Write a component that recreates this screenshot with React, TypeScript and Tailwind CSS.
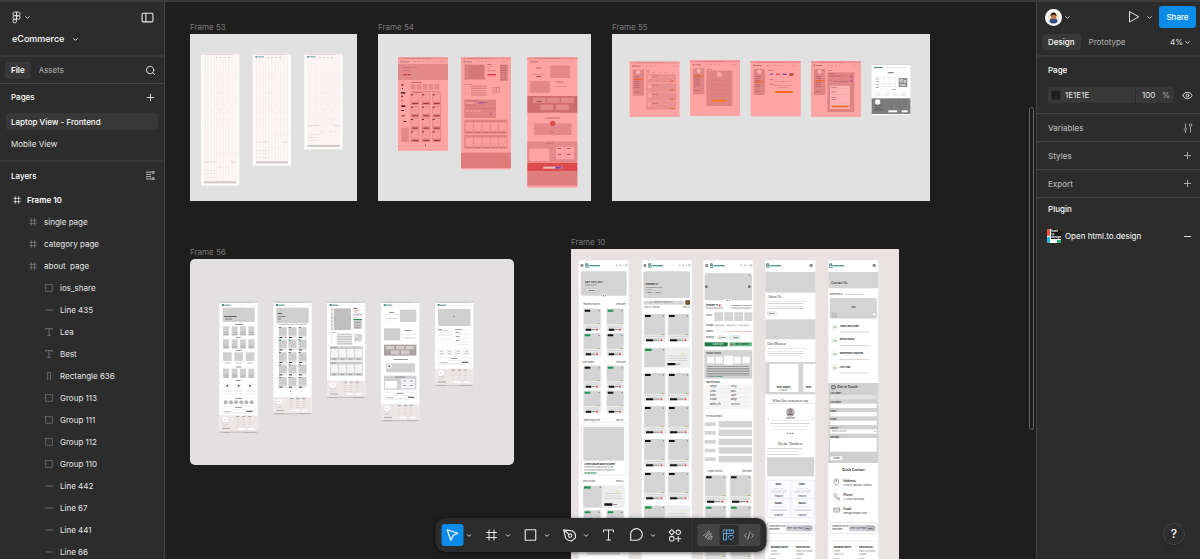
import { ChevronDown, CodeXml, Eye, Minus, PanelLeft, Plus, Search } from "lucide-react";
import clsx from "clsx";
import { useState } from "react";

type Box = [number, number, number, number];

// every combination of the given columns and rows, all the same size
const grid = (xs: number[], ys: number[], w: number, h: number): Box[] =>
  ys.flatMap((y) => xs.map((x): Box => [x, y, w, h]));

const Boxes: React.FC<{ items: Box[]; className: string; r?: number }> = ({ items, className, r }) => (
  <g className={className}>
    {items.map(([x, y, w, h], i) => (
      <rect key={i} x={x} y={y} width={w} height={h} rx={r} />
    ))}
  </g>
);

const At: React.FC<{ x: number; y: number; children: React.ReactNode }> = ({ x, y, children }) => (
  <g transform={`translate(${x} ${y})`}>{children}</g>
);

/* ---------- Artboards. Drawn at three units to the pixel ---------- */

interface ArtboardProps {
  name: string;
  width: number;
  height: number;
  place: string;
  paper: string;
  children: React.ReactNode;
}

const Artboard: React.FC<ArtboardProps> = ({ name, width, height, place, paper, children }) => (
  <figure className={clsx("absolute", place)}>
    <figcaption className="h-3 text-[8px] leading-[10px] text-[#7a7a7a]">{name}</figcaption>
    <svg width={width} height={height} viewBox={`0 0 ${width * 3} ${height * 3}`} className={clsx("block", paper)}>
      {children}
    </svg>
  </figure>
);

const GridPage: React.FC<{ h: number; logo?: boolean }> = ({ h, logo }) => (
  <>
    <rect width="115" height={h} className="fill-[#fffafa]" />
    <Boxes className="fill-[#fbf1f1]" items={grid([10, 19, 28, 37, 46, 55, 64, 73, 82, 91, 100], [6], 5, h - 14)} />
    <Boxes className="fill-[#eadfdf]" items={[[0, 0, 115, 4], [48, 60, 16, 1], [46, 120, 18, 1], [50, 168, 14, 1]]} />
    <Boxes className="fill-[#bbb0b0]" items={[[14, 2, 80, 1], [44, 11, 5, 2], [56, 11, 5, 2], [68, 11, 5, 2], [80, 11, 5, 2]]} />
    <g className="fill-none stroke-[#f1eaea]">
      <rect x="10" y="18" width="95" height="48" />
      {[72, 100, 134, 162, 198].filter((y) => y < h - 80).map((y) =>
        [10, 36, 62, 86].map((x) => <rect key={`${x}-${y}`} x={x} y={y} width="19" height="18" rx="4" />)
      )}
      {[12, 30, 48, 66, 84, 100].map((x) => (
        <circle key={x} cx={x + 2} cy={h - 94} r="6" />
      ))}
    </g>
    <Boxes
      className="fill-[#d8cfcf]"
      items={[[10, h - 72, 36, 2], [88, h - 72, 17, 2], [48, h - 54, 12, 1], [72, h - 54, 10, 1], [90, h - 54, 8, 1], [10, h - 46, 36, 1], [10, h - 36, 34, 1], [10, h - 26, 34, 1]]}
    />
    <rect x="10" y={h - 13} width="96" height="6" className="fill-[#cfc6c6]" />
    {logo && <Boxes className="fill-[#6ea3a0]" items={[[8, 8, 6, 5], [15, 9, 19, 3]]} />}
  </>
);

const RedHeader: React.FC<{ h: number }> = ({ h }) => (
  <>
    <rect width="150" height={h} className="fill-[#ffa3a3]" />
    <rect width="150" height="6" className="fill-[#ee9292]" />
    <Boxes className="fill-[#b86e6e]" items={[[22, 3, 80, 1], [8, 10, 4, 6], [14, 12, 19, 3]]} />
    <Boxes className="fill-[#d98787]" items={grid([48, 60, 72, 84, 124, 132], [12], 6, 2)} />
  </>
);

const Frame54 = () => (
  <>
    <At x={60} y={70}>
      <RedHeader h={281} />
      <rect y="20" width="150" height="48" className="fill-[#e38989]" />
      <Boxes className="fill-[#c97575]" items={[[13, 29, 44, 3], [13, 38, 22, 3], [10, 71, 12, 1]]} />
      <Boxes className="fill-[#c43c45]" items={[[16, 50, 10, 4], [28, 50, 10, 4], [39, 74, 32, 2], [43, 103, 32, 3]]} />
      <Boxes className="fill-[#e38989]" items={[...grid([38, 56, 74, 92, 110], [80], 14, 17), [38, 101, 90, 4], [10, 211, 23, 43]]} />
      <Boxes className="fill-[#dc8080]" items={grid([38, 71, 103], [109, 146, 183, 220], 26, 34)} />
      <Boxes className="fill-[#f79b9b]" items={grid([40, 73, 105], [111, 148, 185, 222], 22, 22)} />
      <Boxes className="fill-[#712c35]" items={grid([39, 72, 104], [111, 148, 185, 222], 6, 3)} />
      <Boxes className="fill-[#a2333b]" items={grid([43, 76, 108], [137, 174, 211, 248], 17, 3)} />
      <Boxes
        className="fill-[#522029]"
        items={[[10, 81, 6, 4], [12, 92, 3, 3], [9, 104, 13, 5], [10, 115, 5, 4], [11, 129, 3, 3], [10, 144, 12, 5], [10, 158, 8, 3], [11, 174, 9, 3], [16, 191, 9, 3], [81, 262, 3, 3]]}
      />
    </At>
    <At x={249} y={70}>
      <RedHeader h={336} />
      <rect x="10" y="21" width="62" height="47" className="fill-[#e79090]" />
      <rect x="21" y="23" width="49" height="42" className="fill-[#d57777]" />
      <Boxes className="fill-[#d57777]" items={grid([12], [22, 31, 40, 49, 58], 7, 7)} />
      <Boxes className="fill-[#a24f55]" items={[[79, 20, 12, 2], [10, 80, 22, 1], [12, 129, 36, 2], [12, 191, 20, 2], [12, 237, 24, 2]]} />
      <rect x="79" y="50" width="26" height="4" className="fill-[#d92e3b]" />
      <Boxes className="fill-[#d98484]" items={[[79, 26, 18, 2], [79, 32, 10, 2], [79, 38, 26, 4], [79, 58, 24, 2], [117, 21, 24, 50]]} />
      <Boxes className="fill-[#b96769]" items={grid([119, 128], [24, 31, 38, 45, 52, 59, 65], 8, 2)} />
      <Boxes className="fill-[#dc8585]" items={[...grid([30], [84, 91, 98, 105, 111], 46, 4), ...grid([12], [86, 96, 106], 5, 2), [95, 89, 22, 18]]} />
      <Boxes className="fill-[#ffa3a3]" items={[[98, 92, 6, 5], [108, 92, 6, 5], [98, 99, 6, 5], [108, 99, 6, 5]]} />
      <Boxes className="fill-[#df8282]" items={[[10, 127, 95, 55], [10, 187, 129, 42], [10, 233, 129, 41]]} />
      <Boxes className="fill-[#f99d9d]" items={[...grid([14, 39, 64, 89, 114], [195, 241], 23, 27), ...grid([15, 27, 39, 51], [159], 8, 4), [14, 135, 26, 4]]} />
      <Boxes className="fill-[#c46a70]" items={[[12, 129, 40, 2], [14, 144, 30, 2], [12, 152, 90, 1], ...grid([18, 43, 68, 93, 118], [224, 270], 14, 2)]} />
      <Boxes className="fill-[#8a45b5]" items={[[53, 134, 22, 2], [50, 139, 14, 1], [87, 169, 4, 3]]} />
      <rect y="286" width="150" height="46" className="fill-[#df7c7c]" />
    </At>
    <At x={448} y={70}>
      <RedHeader h={391} />
      <Boxes className="fill-[#e38989]" items={[[69, 24, 59, 38], [8, 71, 60, 36], [0, 252, 150, 62], [20, 198, 113, 35]]} />
      <Boxes className="fill-[#a24f55]" items={[[26, 31, 16, 2], [86, 73, 22, 2], [55, 181, 42, 2], [55, 258, 24, 1]]} />
      <Boxes className="fill-[#d98484]" items={[[14, 50, 36, 2], [82, 86, 36, 2], [72, 235, 12, 1], [14, 212, 2, 4], [137, 212, 2, 4]]} />
      <rect x="28" y="56" width="12" height="3" className="fill-[#d92e3b]" />
      <rect y="116" width="150" height="50" className="fill-[#cf6d6d]" />
      <Boxes className="fill-[#e38989]" items={[...grid([17, 59, 101], [121], 38, 16), ...grid([39, 86], [142], 38, 16)]} />
      <Boxes className="fill-[#78303a]" items={[[29, 132, 14, 2], [71, 224, 8, 1], [38, 320, 75, 1]]} />
      <circle cx="76" cy="198" r="8" className="fill-[#de4c4e]" />
      <Boxes className="fill-[#ffa3a3]" items={[[6, 274, 60, 37], [86, 268, 54, 38]]} />
      <path d="M113 268v38M86 287h54" className="stroke-[#df80b0] fill-none" />
      <Boxes className="fill-[#8f3848]" items={grid([91, 119], [273, 290], 11, 2)} />
      <rect y="316" width="150" height="25" className="fill-[#dd4c4d]" />
      <rect x="48" y="328" width="56" height="6" className="fill-[#f2bcbc]" />
      <rect x="84" y="328" width="18" height="6" className="fill-[#7b3c9e]" />
      <rect y="341" width="150" height="44" className="fill-[#df7c7c]" />
    </At>
  </>
);

const AccountMenu: React.FC<{ active: number }> = ({ active }) => (
  <>
    <rect x="9" y="24" width="34" height="78" className="fill-[#df8484]" />
    <circle cx="26" cy="32" r="6" className="fill-[#ffb4b4]" />
    <Boxes className="fill-[#b76067]" items={grid([13], [45, 52, 58, 64, 70, 76, 90], 17, 2)} />
    <rect x="12" y={active} width="29" height="3" className="fill-[#ef6c1c]" />
  </>
);

const Frame55 = () => (
  <>
    <At x={53} y={83}>
      <RedHeader h={166} />
      <AccountMenu active={51} />
      <Boxes className="fill-[#bd7074]" items={[[49, 27, 10, 2], ...grid([50, 68, 86, 104, 126], [32], 8, 1)]} />
      <Boxes className="fill-[#e99090]" items={grid([49], [37, 65, 92, 119], 90, 25)} />
      <Boxes className="fill-[#ffa3a3]" items={grid([54], [41, 69, 96, 123], 11, 11)} />
      <Boxes className="fill-[#bd6a6e]" items={grid([68], [42, 70, 97, 124], 16, 2)} />
      <Boxes className="fill-[#e8641f]" items={grid([122], [57, 84, 111, 139], 10, 3)} />
    </At>
    <At x={234} y={79}>
      <RedHeader h={167} />
      <AccountMenu active={46} />
      <Boxes className="fill-[#bd7074]" items={[[51, 27, 15, 2]]} />
      <rect x="49" y="31" width="78" height="106" className="fill-[#df8484]" />
      <circle cx="88" cy="43" r="8" className="fill-[#ffa3a3]" />
      <g className="fill-none stroke-[#cb7276]">
        <rect x="64" y="60" width="46" height="13" />
        <rect x="64" y="79" width="46" height="8" />
        <rect x="64" y="101" width="46" height="8" />
      </g>
      <rect x="65" y="118" width="45" height="6" className="fill-[#f07a18]" />
    </At>
    <At x={416} y={81}>
      <RedHeader h={166} />
      <AccountMenu active={61} />
      <Boxes className="fill-[#b76067]" items={[[51, 27, 17, 2], [57, 55, 10, 2], [57, 68, 12, 2], [70, 61, 52, 1], [70, 72, 52, 1], [82, 79, 30, 1]]} />
      <Boxes className="fill-[#7b43a8]" items={[[57, 38, 10, 3], [96, 38, 12, 4]]} />
      <Boxes className="fill-[#dd2f3a]" items={[[76, 38, 12, 3]]} />
      <rect x="116" y="37" width="12" height="7" className="fill-[#b33f2c]" />
      <rect x="74" y="90" width="52" height="6" className="fill-[#ef6c1c]" />
    </At>
    <At x={597} y={81}>
      <RedHeader h={168} />
      <AccountMenu active={58} />
      <rect x="49" y="34" width="81" height="119" className="fill-[#df8484]" />
      <Boxes className="fill-[#b76067]" items={[[51, 27, 10, 2], [53, 37, 18, 2], [53, 42, 54, 1], [53, 47, 44, 1], [53, 57, 10, 1], [66, 61, 44, 2]]} />
      <Boxes className="fill-[#c93b8d]" items={grid([119], [43, 56], 5, 7)} />
      <rect x="57" y="74" width="59" height="70" className="fill-[#ffb3b3]" />
      <Boxes className="fill-[#b76067]" items={grid([61], [78, 92, 108, 114], 16, 2)} />
      <Boxes className="fill-[#e39c9c]" items={grid([61], [83, 100, 121, 128], 50, 1)} />
      <rect x="61" y="134" width="52" height="5" className="fill-[#ef6c1c]" />
    </At>
    <At x={779} y={87}>
      <rect width="116" height="156" className="fill-white" />
      <Boxes className="fill-[#d6d6d6]" items={[[0, 1, 116, 5], [46, 12, 60, 2], [12, 43, 60, 1], [12, 62, 60, 1], [12, 70, 60, 1], [34, 43, 1, 34], [52, 43, 1, 34], [71, 43, 1, 34]]} />
      <Boxes className="fill-[#3f8782]" items={[[8, 11, 6, 5], [15, 12, 19, 3]]} />
      <Boxes className="fill-[#8f8f8f]" items={[[48, 27, 18, 4], [12, 47, 10, 2], [12, 54, 10, 2], [12, 64, 10, 2], [12, 73, 10, 2], [60, 79, 12, 2], [81, 45, 26, 27]]} />
      <Boxes className="fill-[#c4c4c4]" items={[[84, 48, 9, 10], [96, 51, 8, 9], [86, 63, 16, 6]]} />
      <Boxes className="fill-[#b0b0b0]" items={grid([12, 39, 64, 91], [92, 98], 13, 1)} />
      <rect y="106" width="116" height="47" className="fill-[#7d7d7d]" />
      <circle cx="18" cy="117" r="8" className="fill-white" />
      <Boxes className="fill-[#5c5c5c]" items={[[10, 127, 24, 2], [10, 133, 20, 2], [9, 139, 26, 3], ...grid([55, 76, 94], [110, 117, 124, 131], 10, 1)]} />
      <Boxes className="fill-white" items={[[50, 142, 27, 6], [90, 142, 18, 6]]} />
    </At>
  </>
);

const SiteFooter: React.FC<{ y: number }> = ({ y }) => (
  <At x={0} y={y}>
    <rect width="115" height="48" className="fill-[#ede7e7]" />
    <circle cx="18" cy="13" r="8" className="fill-white" />
    <Boxes className="fill-[#c4bcbc]" items={[[15, 12, 6, 2], [9, 22, 18, 1], [9, 27, 20, 1], [9, 32, 16, 1], ...grid([50, 68, 86], [8, 14, 20, 26, 32], 9, 1)]} />
    <Boxes className="fill-[#8d8787]" items={[...grid([50, 68, 86], [3], 10, 2), [9, 39, 24, 2]]} />
    <Boxes className="fill-white" items={[[56, 38, 22, 5], [86, 38, 18, 5]]} />
    <rect y="48" width="115" height="5" className="fill-[#cdc6c6]" />
    <Boxes className="fill-[#8f8888]" items={[[8, 50, 24, 1], [76, 50, 32, 1]]} />
  </At>
);

const WirePage: React.FC<{ h: number; children: React.ReactNode }> = ({ h, children }) => (
  <>
    <rect width="115" height={h} className="fill-white" />
    <rect width="115" height="6" className="fill-[#d6d6d6]" />
    <Boxes className="fill-[#a0a0a0]" items={[[14, 3, 80, 1]]} />
    <Boxes className="fill-[#4b8b87]" items={[[8, 9, 6, 6], [15, 11, 19, 3]]} />
    <Boxes className="fill-[#c4c4c4]" items={grid([44, 53, 62, 71, 98, 104], [12], 5, 1)} />
    {children}
    <SiteFooter y={h - 53} />
  </>
);

const Newsletter: React.FC<{ y: number }> = ({ y }) => (
  <At x={9} y={y}>
    <rect width="97" height="21" rx="2" className="fill-white stroke-[#cfcfcf]" />
    <Boxes className="fill-[#6f6f6f]" items={[[38, 3, 20, 2], [72, 13, 19, 4], [5, 14, 22, 1]]} />
    <Boxes className="fill-[#c9c9c9]" items={[[30, 8, 40, 1], [5, 18, 66, 1]]} />
  </At>
);

const Frame56 = () => (
  <>
    <At x={88} y={126}>
      <WirePage h={396}>
        <Boxes className="fill-[#d0d0d0]" items={[[10, 20, 96, 43], ...grid([11, 37, 62, 87], [76, 115, 203], 18, 28), ...grid([11, 45, 79], [154], 26, 26)]} />
        <Boxes className="fill-[#5d5d5d]" items={[[14, 45, 38, 3], [17, 53, 22, 2], [47, 70, 24, 2], [50, 109, 14, 2], [50, 147, 16, 2], [50, 197, 16, 2], [50, 237, 14, 2], [48, 292, 20, 2]]} />
        <Boxes className="fill-[#a4a4a4]" items={[...grid([13, 39, 64, 89], [94, 99, 134, 139, 221, 227], 14, 2), ...grid([16, 49, 83], [184, 188], 18, 1)]} />
        <Boxes className="fill-[#d8d8d8]" items={grid([10, 44, 78], [268, 272, 276], 29, 1)} />
        {[24, 58, 92].map((x) => (
          <g key={x}>
            <circle cx={x} cy="254" r="8" className="fill-[#f0f0f0]" />
            <circle cx={x} cy="254" r="3" className="fill-[#666]" />
          </g>
        ))}
        {[19, 35, 50, 66, 81, 97].map((x) => (
          <circle key={x} cx={x} cy="304" r="6" className="fill-[#b5b5b5]" />
        ))}
        <Newsletter y={316} />
      </WirePage>
    </At>
    <At x={250} y={126}>
      <WirePage h={341}>
        <rect x="9" y="20" width="97" height="47" className="fill-[#d0d0d0]" />
        <Boxes className="fill-[#5d5d5d]" items={[[13, 36, 13, 3], [13, 46, 24, 2], [13, 53, 10, 2], [16, 70, 84, 1]]} />
        <Boxes className="fill-[#e6e6e6]" items={grid([16, 45, 75], [79, 116, 154, 191, 228], 25, 33)} />
        <Boxes className="fill-[#cdcdcd]" items={grid([17, 46, 76], [79, 116, 154, 191, 228], 23, 25)} />
        <Boxes className="fill-[#3c3c3c]" items={[...grid([17, 46, 76], [79, 154, 191, 228], 6, 2), ...grid([18, 47, 77], [108, 145, 183, 220, 257], 9, 3)]} />
        <Boxes className="fill-[#239058]" items={[...grid([17, 46, 76], [116], 6, 3), [50, 271, 3, 2]]} />
        <rect x="35" y="108" width="3" height="3" className="fill-[#d44]" />
      </WirePage>
    </At>
    <At x={411} y={126}>
      <WirePage h={292}>
        <Boxes className="fill-[#cfcfcf]" items={[...grid([12], [22, 34, 45, 56, 67, 78], 7, 9), [82, 99, 22, 22]]} />
        <rect x="21" y="22" width="51" height="65" className="fill-[#c0c0c0]" />
        <Boxes className="fill-[#666]" items={[[79, 21, 12, 3], [23, 53, 2, 3], [68, 53, 2, 3], [11, 93, 18, 1]]} />
        <Boxes className="fill-[#e58a8a]" items={[[79, 27, 18, 2], [79, 32, 12, 2], [79, 50, 24, 1]]} />
        <Boxes className="fill-[#c8c8c8]" items={[[79, 38, 26, 6], ...grid([30], [98, 105, 112, 119, 126], 45, 5), ...grid([12], [100, 108, 116, 124], 4, 2), [80, 60, 24, 24]]} />
        <Boxes className="fill-[#999]" items={grid([81], [63, 73, 79], 20, 2)} />
        <rect x="79" y="54" width="26" height="4" className="fill-[#239058]" />
        <Boxes className="fill-[#c9c9c9]" items={[[9, 136, 98, 42], [9, 182, 98, 42]]} />
        <Boxes className="fill-[#f4f4f4]" items={[...grid([11, 35, 59, 83], [144, 190], 22, 26), [87, 103, 6, 5]]} />
        <Boxes className="fill-[#888]" items={[...grid([11], [138, 185], 18, 2), ...grid([17, 41, 65, 89], [173, 219], 10, 2)]} />
      </WirePage>
    </At>
    <At x={573} y={126}>
      <WirePage h={362}>
        <Boxes className="fill-[#d0d0d0]" items={[[57, 26, 49, 37], [9, 82, 49, 36], [15, 187, 87, 27], [9, 224, 97, 42]]} />
        <Boxes className="fill-[#6a6a6a]" items={[[24, 33, 16, 2], [70, 88, 22, 2], [37, 175, 44, 2], [42, 227, 30, 2]]} />
        <Boxes className="fill-[#c4c4c4]" items={[[9, 41, 42, 1], [15, 51, 34, 2], [24, 61, 12, 1], [63, 99, 42, 1], [66, 110, 36, 2], [44, 205, 40, 1]]} />
        <rect x="9" y="131" width="97" height="33" className="fill-[#aca1a1]" />
        <Boxes className="fill-[#d2cccc]" items={[...grid([15, 45, 74], [135], 25, 10), ...grid([30, 60], [148], 25, 12)]} />
        <circle cx="25" cy="196" r="7" className="fill-white" />
        <circle cx="25" cy="196" r="3" className="fill-[#555]" />
        <rect x="12" y="240" width="36" height="22" className="fill-white" />
        <g className="fill-[#fafafa] stroke-[#c5c0ef]">
          <rect x="60" y="233" width="42" height="30" />
          <path d="M81 233v30M60 248h42" />
        </g>
        <Boxes className="fill-[#555]" items={grid([67, 87], [239, 253], 8, 2)} />
        <Newsletter y={274} />
      </WirePage>
    </At>
    <At x={735} y={126}>
      <WirePage h={256}>
        <rect x="9" y="24" width="97" height="51" className="fill-[#d0d0d0]" />
        <Boxes className="fill-[#777]" items={[[54, 45, 5, 2], [9, 84, 12, 2], [60, 84, 22, 2], [9, 89, 30, 1], ...grid([62], [94, 106, 118], 12, 2)]} />
        <Boxes className="fill-[#d4d4d4]" items={[...grid([9], [94, 99, 104, 116], 42, 1), ...grid([64], [99, 111, 123, 131], 40, 1)]} />
        <g className="fill-[#f6f6f6] stroke-[#d6d6d6]">
          {[10, 35, 60, 86].map((x) => (
            <rect key={x} x={x} y="146" width="18" height="15" rx="4" />
          ))}
        </g>
        <Boxes className="fill-[#b0b0b0]" items={grid([15, 40, 65, 91], [150, 156], 8, 2)} />
        <Newsletter y={169} />
      </WirePage>
    </At>
  </>
);

/* ---------- Frame 10: the mobile shop pages ---------- */

const MobilePage: React.FC<{ x: number; simple?: boolean; children: React.ReactNode }> = ({ x, simple, children }) => (
  <At x={x} y={34}>
    <rect width="150" height="950" className="fill-white" />
    <g className="fill-none stroke-[#286f6b] stroke-2">
      <path d={simple ? "M4 10h6v4h-6zM4 15h8v6h-8z" : "M21 10h6v4h-6zM21 15h8v6h-8z"} />
    </g>
    <rect x={simple ? 15 : 32} y="14" width="32" height="4" className="fill-[#4d9691]" />
    {simple ? (
      <Boxes className="fill-[#555]" items={grid([133], [12, 15, 18], 9, 2)} />
    ) : (
      <>
        <Boxes className="fill-[#555]" items={grid([6], [12, 15, 18], 8, 2)} />
        <g className="fill-none stroke-[#777]">
          <circle cx="114" cy="15" r="2" />
          <path d="M123 17v-4h3v4zM132 14h3l-1 4M140 13h6v4h-6z" />
        </g>
      </>
    )}
    {children}
  </At>
);

interface ProductProps {
  x: number;
  y: number;
  w?: number;
  h?: number;
  green?: boolean;
}

const Product: React.FC<ProductProps> = ({ x, y, w = 66, h = 84, green }) => (
  <At x={x} y={y}>
    <rect width={w} height={h} className="fill-[#e9e9e9]" />
    <rect x="2" width={w - 5} height={h - 22} className="fill-[#d4d4d4]" />
    <rect x="4" y="3" width="17" height="6" rx="1" className={green ? "fill-[#219254]" : "fill-[#111]"} />
    <rect x={w - 9} y="4" width="4" height="4" className="fill-[#8a8a8a]" />
    <rect x={w - 16} y={h - 24} width="4" height="3" className="fill-[#e0cf52]" />
    <rect x={w - 11} y={h - 24} width="7" height="2" className="fill-[#a0a0a0]" />
    <Boxes className="fill-[#d0d0d0]" items={[[6, h - 17, w - 12, 2], [6, h - 12, w - 14, 2]]} />
    <rect x="7" y={h - 8} width={w > 60 ? 22 : 17} height="6" rx="1" className="fill-[#111]" />
    <rect x={w > 60 ? 30 : 26} y={h - 7} width={w > 60 ? 17 : 10} height="3" className="fill-[#8b8b8b]" />
    <path d={`M${w - 16} ${h - 7}q2-2 3 0q2-2 3 0q0 3-3 5q-3-2-3-5z`} className="fill-[#ee2b33]" />
  </At>
);

const WideProduct: React.FC<{ x: number; y: number; w: number; h: number }> = ({ x, y, w, h }) => (
  <At x={x} y={y}>
    <rect width={w} height={h} className="fill-[#ededed]" />
    <rect x="2" y="2" width={w / 2 - 8} height={h - 4} className="fill-[#d4d4d4]" />
    <rect x="4" y="3" width="20" height="7" className="fill-[#219254]" />
    <rect x={w / 2 - 12} y="4" width="4" height="4" className="fill-[#8a8a8a]" />
    <Boxes className="fill-[#cbcbcb]" items={grid([w / 2 + 4], [24, 31, 38], w / 2 - 12, 2)} />
    <rect x={w - 24} y="18" width="4" height="3" className="fill-[#e0cf52]" />
    <rect x={w / 2 + 2} y={h - 14} width="24" height="7" rx="1" className="fill-[#111]" />
    <rect x={w / 2 + 28} y={h - 12} width="12" height="3" className="fill-[#8b8b8b]" />
  </At>
);

const Signup = () => (
  <>
    <rect x="5" y="787" width="142" height="32" rx="8" className="fill-white stroke-[#b7b4c8]" />
    <text x="12" y="799" className="fill-[#222] text-[6px]">Subscribe To Our</text>
    <text x="12" y="808" className="fill-[#222] text-[6px]">Newsletter</text>
    <rect x="63" y="795" width="78" height="17" rx="5" className="fill-[#d3d3dc] stroke-[#a9a9b8]" />
    <text x="66" y="806" className="fill-[#333] text-[6px]">Enter your email</text>
    <rect x="113" y="797" width="26" height="13" rx="6" className="fill-[#bdbdc4] stroke-[#8b8b94]" />
    <rect x="120" y="803" width="13" height="2" className="fill-[#555]" />
    <path d="M0 842h150" className="stroke-[#d4d4d4]" />
    <g className="fill-[#1c1c1c] text-[8px] font-bold">
      <text x="17" y="863">Browse More</text>
      <text x="92" y="863">Resources</text>
    </g>
    <g className="fill-[#777] text-[6px]">
      <text x="17" y="874">Home</text>
      <text x="17" y="885">About Us</text>
      <text x="92" y="874">Track Your Order</text>
      <text x="92" y="885">Support</text>
    </g>
    <Boxes className="fill-[#b0b0b0]" items={grid([17, 92], [894], 16, 2)} />
  </>
);

const HomePage = () => (
  <MobilePage x={23}>
    <rect x="6" y="33" width="138" height="73" rx="5" className="fill-[#d4d4d4]" />
    <text x="19" y="68" className="fill-[#222] text-[8px] font-semibold">GET 50% OFF</text>
    <rect x="19" y="73" width="34" height="2" className="fill-[#777]" />
    <rect x="20" y="84" width="34" height="11" rx="3" className="fill-[#dedede] stroke-[#aaa]" />
    <rect x="30" y="89" width="18" height="2" className="fill-[#555]" />
    <rect x="65" y="103" width="18" height="7" rx="3" className="fill-white" />
    <Boxes className="fill-[#444]" items={grid([68, 73, 78], [105], 3, 3)} r={1} />
    <g className="fill-[#333] text-[6px]">
      <text x="13" y="135">Featured Products</text>
      <text x="111" y="135">View More</text>
      <text x="13" y="307">Best Sellers</text>
      <text x="111" y="307">View More</text>
      <text x="15" y="482">Latest Blog Posts</text>
      <text x="111" y="482">View All</text>
      <text x="13" y="665">New Arrivals</text>
      <text x="111" y="665">View All</text>
    </g>
    {[145, 219, 316, 391].map((y, i) => (
      <g key={y}>
        <Product x={14} y={y} w={54} h={68} green={i === 1 || i === 3} />
        <Product x={83} y={y} w={54} h={68} green={i === 0 || i === 2} />
      </g>
    ))}
    <path d="M13 487h132" className="stroke-[#c8c8c8]" />
    <rect x="8" y="495" width="134" height="149" rx="6" className="fill-white stroke-[#e0e0e0] stroke-2" />
    <rect x="14" y="500" width="122" height="101" className="fill-[#d4d4d4]" />
    <text x="17" y="614" className="fill-[#222] text-[7px] font-bold">Lorem ipsum dolor sit amet</text>
    <g className="fill-[#777] text-[6px]">
      <text x="17" y="624">consectetur adipiscing elit sed</text>
      <text x="17" y="631">do eiusmod tempor incididunt ut</text>
    </g>
    <text x="17" y="640" className="fill-[#1d8a50] text-[7px] font-bold">Read More</text>
    <WideProduct x={12} y={675} w={126} h={68} />
    <Product x={14} y={750} w={54} h={68} green />
    <Product x={83} y={750} w={54} h={68} green />
    <rect x="26" y="874" width="98" height="10" className="fill-[#e2e2e2]" />
  </MobilePage>
);

const CategoryPage = () => (
  <MobilePage x={212}>
    <rect x="5" y="33" width="140" height="80" rx="5" className="fill-[#d4d4d4]" />
    <text x="12" y="73" className="fill-[#222] text-[8px] font-bold">iPhone 17</text>
    <Boxes className="fill-[#8a8a8a]" items={[[12, 81, 50, 2], [12, 86, 20, 1]]} />
    <rect x="12" y="92" width="22" height="8" rx="2" className="fill-[#e4e4e4] stroke-[#aaa]" />
    <rect x="38" y="92" width="22" height="8" rx="2" className="fill-[#e4e4e4] stroke-[#aaa]" />
    <Boxes className="fill-[#666]" items={[[16, 95, 14, 2], [42, 95, 14, 2]]} />
    <rect x="6" y="121" width="121" height="12" rx="3" className="fill-[#d8d8d8]" />
    <circle cx="27" cy="126" r="2" className="fill-none stroke-[#777]" />
    <text x="36" y="129" className="fill-[#777] text-[6px]">Search for products</text>
    <rect x="131" y="120" width="14" height="13" rx="2" className="fill-[#61421f]" />
    <circle cx="138" cy="126" r="3" className="fill-none stroke-[#d8a860]" />
    <text x="8" y="143" className="fill-[#555] text-[6px]">Sort by: Popular</text>
    <text x="122" y="143" className="fill-[#555] text-[6px]">View All</text>
    <WideProduct x={6} y={262} w={139} h={60} />
    {[161, 338, 437, 536, 635].map((y) => (
      <g key={y}>
        <Product x={6} y={y} />
        <Product x={78} y={y} />
      </g>
    ))}
    <WideProduct x={6} y={735} w={139} h={60} />
  </MobilePage>
);

const SinglePage = () => (
  <MobilePage x={397}>
    <rect x="4" y="39" width="142" height="81" rx="5" className="fill-[#d4d4d4]" />
    <circle cx="9" cy="79" r="4" className="fill-[#666]" />
    <circle cx="138" cy="79" r="4" className="fill-[#666]" />
    <rect x="136" y="43" width="4" height="5" className="fill-[#999]" />
    <rect x="63" y="116" width="20" height="7" rx="3" className="fill-white" />
    <Boxes className="fill-[#555]" items={grid([67, 72, 77], [118], 3, 3)} r={1} />
    <text x="8" y="138" className="fill-[#222] text-[8px] font-bold">iPhone 17</text>
    <path d="M46 133q2-2 3 0q2-2 3 0q0 4-3 6q-3-2-3-6z" className="fill-[#e23b42]" />
    <Boxes className="fill-[#777]" items={[[8, 142, 52, 2], [84, 134, 30, 2], [118, 134, 26, 2], [84, 142, 60, 2]]} />
    <g className="fill-[#333] text-[6px]">
      <text x="7" y="168">Colors</text>
      <text x="7" y="197">Storage</text>
      <text x="7" y="216">Quantity</text>
      <text x="7" y="234">Shipping</text>
    </g>
    <Boxes className="fill-[#d4d4d4]" items={[...grid([33, 63, 93], [156], 26, 26), [123, 156, 24, 26], ...grid([33, 69, 105], [192], 31, 6)]} />
    <rect x="43" y="209" width="20" height="10" rx="5" className="fill-none stroke-[#c8c8c8]" />
    <rect x="67" y="212" width="78" height="2" className="fill-[#f2aaaa]" />
    <rect x="42" y="226" width="28" height="11" rx="3" className="fill-[#f1f1f1] stroke-[#ddd]" />
    <rect x="46" y="230" width="5" height="4" className="fill-[#d9b74a]" />
    <rect x="78" y="226" width="32" height="11" rx="3" className="fill-[#e3f0e9] stroke-[#a9c9b8]" />
    <Boxes className="fill-[#666]" items={[[53, 231, 13, 2], [89, 231, 16, 2]]} />
    <rect x="4" y="246" width="69" height="12" className="fill-[#1d7746]" />
    <rect x="78" y="246" width="68" height="12" className="fill-[#66c493]" />
    <text x="27" y="254" className="fill-white text-[6px]">Add to Cart</text>
    <text x="94" y="254" className="fill-[#1a1a1a] text-[6px] font-semibold">Add to Wishlist</text>
    <path d="M83 250q2-2 3 0q2-2 3 0q0 4-3 6q-3-2-3-6z" className="fill-[#e23b42]" />
    <rect x="4" y="270" width="142" height="84" className="fill-[#d4d4d4] stroke-[#c4c4c4]" />
    <text x="9" y="280" className="fill-[#333] text-[6px] font-semibold">Product Details</text>
    <Boxes className="fill-white" items={[...grid([12, 37, 91, 118], [289], 21, 20), [62, 286, 26, 27]]} />
    <Boxes className="fill-[#808080]" items={[...grid([10], [318, 323, 328, 333, 338, 343], 128, 2), [10, 348, 24, 2]]} />
    <rect x="36" y="347" width="22" height="2" className="fill-[#2b8b5b]" />
    <text x="8" y="368" className="fill-[#333] text-[6px] font-semibold">Specifications</text>
    <rect x="4" y="372" width="142" height="74" className="fill-[#f6f6f6]" />
    <g className="fill-[#333] text-[6px]">
      {["Weight", "Colors", "Brand", "Display", "Battery Life"].map((spec, i) => (
        <g key={spec}>
          <text x="20" y={381 + i * 13}>{spec}</text>
          <text x="82" y={381 + i * 13}>{["200 g", "Black", "Apple", "Range", "100 hours"][i]}</text>
          <path d={`M20 ${385 + i * 13}h120`} className="stroke-[#e2e2e2]" />
        </g>
      ))}
      <text x="8" y="470">Technical Details</text>
      <text x="12" y="635">People Also Buy</text>
      <text x="115" y="635">View More</text>
    </g>
    <Boxes className="fill-[#d4d4d4]" items={[...grid([4], [486, 512, 539, 565, 591], 33, 11), ...grid([46], [482, 508, 535, 561, 587], 100, 19)]} />
    <Product x={4} y={645} />
    <Product x={79} y={645} />
    <Product x={4} y={736} green />
    <Product x={79} y={736} green />
    <Product x={4} y={827} green />
    <Product x={79} y={827} green />
  </MobilePage>
);

const AboutPage = () => (
  <MobilePage x={583} simple>
    <Boxes className="fill-[#d4d4d4]" items={[[0, 35, 150, 62], [0, 177, 150, 60], [0, 305, 150, 97], [5, 591, 142, 57]]} />
    <g className="fill-[#333] font-['Liberation_Serif'] text-[11px]">
      <text x="6" y="112">About Us</text>
      <text x="6" y="253">Our Mission</text>
      <text x="75" y="426" textAnchor="middle">What Our customers say</text>
      <text x="75" y="553" textAnchor="middle">By the Numbers</text>
    </g>
    <Boxes
      className="fill-[#bdbdbd]"
      items={[
        [6, 122, 118, 1], [6, 129, 108, 2], [6, 137, 108, 1], [6, 144, 108, 2], [6, 265, 118, 1], [6, 272, 108, 1], [6, 279, 108, 2], [6, 286, 108, 1],
        [6, 430, 140, 1], [15, 481, 118, 1], [15, 489, 118, 2], [20, 498, 108, 1], [26, 507, 96, 1],
        [6, 564, 104, 2], [6, 572, 92, 1], [6, 581, 92, 2],
      ]}
    />
    <rect x="5" y="154" width="28" height="11" rx="3" className="fill-[#ececec] stroke-[#ccc]" />
    <rect x="11" y="159" width="16" height="2" className="fill-[#888]" />
    <Boxes className="fill-white" items={[[12, 311, 87, 84], [114, 311, 36, 84]]} />
    <text x="55" y="382" textAnchor="middle" className="fill-[#222] text-[7px] font-bold">Best Quality</text>
    <text x="122" y="382" className="fill-[#222] text-[7px] font-bold">Best</text>
    <text x="55" y="391" textAnchor="middle" className="fill-[#2b8b5b] text-[6px]">Products</text>
    <circle cx="75" cy="456" r="13" className="fill-[#b9b0b0]" />
    <circle cx="75" cy="451" r="4" className="fill-none stroke-[#555] stroke-2" />
    <path d="M67 463q8-8 16 0z" className="fill-none stroke-[#555] stroke-2" />
    <text x="75" y="476" textAnchor="middle" className="fill-[#333] text-[6px]">John Doe</text>
    <path d="M10 473l-3 3 3 3M139 473l3 3-3 3" className="fill-none stroke-[#555]" />
    <Boxes className="fill-[#555]" items={grid([66, 73, 80], [517], 4, 4)} r={2} />
    <g className="fill-[#fafaff] stroke-[#cfcaf6]">
      <rect x="5" y="659" width="142" height="113" />
      <path d="M76 659v113M5 715h142" />
    </g>
    <g className="fill-[#222]">
      {["10K+", "25K+", "100K+", "1000+"].map((stat, i) => (
        <At key={stat} x={40 + (i % 2) * 71} y={674 + Math.floor(i / 2) * 56}>
          <text textAnchor="middle" className="text-[8px] font-bold">{stat}</text>
          <Boxes className="fill-[#c8c8c8]" items={[[-16, 9, 32, 1], [-24, 16, 48, 1], [-24, 20, 48, 2]]} />
          <text y="37" textAnchor="middle" className="text-[6px]">Products</text>
        </At>
      ))}
    </g>
    <Signup />
  </MobilePage>
);

const ContactPage = () => (
  <MobilePage x={772} simple>
    <rect y="35" width="150" height="49" className="fill-[#d4d4d4]" />
    <text x="9" y="72" className="fill-[#222] text-[9px] font-medium">Contact Us</text>
    <text x="4" y="103" className="fill-[#333] text-[7px]">Welcome to</text>
    <rect x="50" y="101" width="55" height="2" className="fill-[#bbb]" />
    <rect x="5" y="114" width="140" height="60" rx="4" className="fill-[#d4d4d4] stroke-[#c4c4c4]" />
    <text x="75" y="144" textAnchor="middle" className="fill-[#333] text-[7px]">Map</text>
    <rect x="11" y="158" width="14" height="13" rx="2" className="fill-[#c6c6c6] stroke-[#999]" />
    <circle cx="137" cy="162" r="6" className="fill-[#f2f2f2] stroke-[#999]" />
    {["Track Your Order", "Return Policy", "Wholesaler Inquiries", "Live Chat"].map((topic, i) => (
      <At key={topic} x={19} y={199 + i * 41}>
        <circle r="9" className="fill-white stroke-[#c9d8c9]" />
        <path d="M-4-2h6v5h-6zM2 0h3v3h-3" className="fill-none stroke-[#4a9440]" />
        <text x="15" y="0" className="fill-[#222] text-[7px] font-bold">{topic}</text>
        <rect x="15" y="15" width="88" height="2" className="fill-[#c4c4c4]" />
      </At>
    ))}
    <rect y="368" width="150" height="240" className="fill-[#d0d0d0]" />
    <rect x="10" y="376" width="11" height="9" rx="2" className="fill-none stroke-[#333] stroke-2" />
    <path d="M13 380h5M13 388l3-3" className="stroke-[#333]" />
    <text x="27" y="384" className="fill-[#222] text-[10px] font-semibold">Get in Touch</text>
    <rect x="5" y="404" width="140" height="13" className="fill-[#e2e2e2]" />
    <Boxes className="fill-white" items={[...grid([5], [430, 455, 481, 507], 140, 13), [5, 533, 140, 41]]} />
    <g className="fill-[#333] text-[6px] font-semibold">
      {["First Name*", "Last Name*", "Email*", "Phone", "Subject*", "Message"].map((field, i) => (
        <text key={field} x="6" y={402 + i * 26}>{field}</text>
      ))}
    </g>
    <text x="10" y="516" className="fill-[#888] text-[6px]">Select a subject</text>
    <path d="M138 512l2 3 2-3z" className="fill-[#444]" />
    <rect x="4" y="587" width="40" height="14" rx="6" className="fill-white stroke-[#999]" />
    <text x="24" y="596" textAnchor="middle" className="fill-[#333] text-[6px]">Submit</text>
    <text x="75" y="632" textAnchor="middle" className="fill-[#222] text-[10px] font-semibold">Quick Contact</text>
    <g className="fill-[#222] text-[9px] font-semibold">
      <text x="45" y="664">Address</text>
      <text x="45" y="706">Phone</text>
      <text x="45" y="749">Email</text>
    </g>
    <g className="fill-[#333] text-[7px]">
      <text x="45" y="676">7730 St Vancouv, Ontario</text>
      <text x="45" y="718">+1 (000) 000 0000</text>
      <text x="45" y="760">sales@company.com</text>
    </g>
    <g className="fill-none stroke-[#777] stroke-2">
      <path d="M24 676c-4-6-7-9-7-13a7 7 0 0 1 14 0c0 4-3 7-7 13z" />
      <circle cx="24" cy="662" r="2" />
      <path d="M18 700c-2 2-1 7 4 12s10 7 13 4l-4-5-3 2-5-5 2-4z" />
      <rect x="16" y="743" width="18" height="12" rx="2" />
      <path d="M17 745l8 6 8-6" />
    </g>
    <Signup />
  </MobilePage>
);

const Canvas = () => (
  <>
    <Artboard name="Frame 53" width={167} height={167} place="left-[25px] top-5" paper="bg-[#e2e1e2]">
      <At x={33} y={58}><GridPage h={397} /></At>
      <At x={188} y={58}><GridPage h={337} logo /></At>
      <At x={343} y={58}><GridPage h={288} logo /></At>
    </Artboard>
    <Artboard name="Frame 54" width={213} height={167} place="left-[213px] top-5" paper="bg-[#e2e1e2]">
      <Frame54 />
    </Artboard>
    <Artboard name="Frame 55" width={318} height={167} place="left-[447px] top-5" paper="bg-[#e2e1e2]">
      <Frame55 />
    </Artboard>
    <Artboard name="Frame 56" width={324} height={206} place="left-[25px] top-[245px]" paper="rounded-[5px] bg-[#e2e0e1]">
      <Frame56 />
    </Artboard>
    <Artboard name="Frame 10" width={328} height={330} place="left-[406px] top-[235px]" paper="bg-[#e8e2e2]">
      <HomePage />
      <CategoryPage />
      <SinglePage />
      <AboutPage />
      <ContactPage />
    </Artboard>
  </>
);

/* ---------- Icons ---------- */

const Icon: React.FC<{ size?: number; box?: number; className?: string; children: React.ReactNode }> = ({
  size = 12,
  box = 24,
  className,
  children
}) => (
  <svg
    width={size}
    height={size}
    viewBox={`0 0 ${box} ${box}`}
    fill="none"
    stroke="currentColor"
    strokeWidth="2"
    strokeLinecap="round"
    strokeLinejoin="round"
    className={clsx("shrink-0", className)}
  >
    {children}
  </svg>
);

const Caret = () => <ChevronDown size={7} strokeWidth={3} className="shrink-0" />;

const FrameIcon: React.FC<{ size?: number }> = ({ size = 8 }) => (
  <Icon size={size}>
    <path d="M7 2v20M17 2v20M2 7h20M2 17h20" />
  </Icon>
);

const layerIcons: Record<string, React.ReactNode> = {
  frame: <FrameIcon />,
  group: (
    <Icon size={8}>
      <rect x="2" y="2" width="20" height="20" strokeDasharray="3 3" />
    </Icon>
  ),
  line: (
    <Icon size={8}>
      <path d="M2 12h20" />
    </Icon>
  ),
  text: (
    <Icon size={8}>
      <path d="M2 5V2h20v3M12 2v20M8 22h8" />
    </Icon>
  ),
  rect: (
    <Icon size={8}>
      <path d="M8 22V2h9v20" />
    </Icon>
  )
};

/* ---------- Left panel ---------- */

const layers = [
  { type: "frame", name: "single page", pad: "pl-[29px]" },
  { type: "frame", name: "category page", pad: "pl-[29px]" },
  { type: "frame", name: "about  page", pad: "pl-[29px]" },
  { type: "group", name: "ios_share", pad: "pl-[45px]" },
  { type: "line", name: "Line 435", pad: "pl-[45px]" },
  { type: "text", name: "Lea", pad: "pl-[45px]" },
  { type: "text", name: "Best", pad: "pl-[45px]" },
  { type: "rect", name: "Rectangle 636", pad: "pl-[45px]" },
  { type: "group", name: "Group 113", pad: "pl-[45px]" },
  { type: "group", name: "Group 111", pad: "pl-[45px]" },
  { type: "group", name: "Group 112", pad: "pl-[45px]" },
  { type: "group", name: "Group 110", pad: "pl-[45px]" },
  { type: "line", name: "Line 442", pad: "pl-[45px]" },
  { type: "line", name: "Line 67", pad: "pl-[45px]" },
  { type: "line", name: "Line 441", pad: "pl-[45px]" },
  { type: "line", name: "Line 66", pad: "pl-[45px]" }
];

const LeftPanel = () => {
  const [page, setPage] = useState("Laptop View - Frontend");

  return (
    <aside className="flex w-[165px] shrink-0 flex-col overflow-hidden border-r border-[#444] bg-[#2c2c2c]">
      <header className="flex h-[55px] shrink-0 flex-col gap-2 border-b-2 border-[#383838] pt-[7px] pr-[10px] pl-3">
        <div className="flex h-4 items-center justify-between">
          <button aria-label="Main menu" className="flex items-center gap-[3px]">
            <svg width="9" height="13" viewBox="0 0 10 14" fill="none" stroke="currentColor" strokeWidth="1">
              <path d="M5 1H3a2 2 0 0 0 0 4h2zM5 1h2a2 2 0 0 1 0 4H5zM5 5H3a2 2 0 0 0 0 4h2zM5 7a2 2 0 1 1 4 0 2 2 0 0 1-4 0zM5 9H3a2 2 0 1 0 2 2z" />
            </svg>
            <Caret />
          </button>
          <button aria-label="Minimize UI">
            <Icon size={13}>
              <rect x="2" y="4" width="20" height="16" rx="2" />
              <path d="M9 4v16" />
            </Icon>
          </button>
        </div>
        <button className="flex items-center gap-2 text-[9px] leading-3 font-medium text-white">
          eCommerce
          <Caret />
        </button>
      </header>
      <div className="flex h-[27px] shrink-0 items-center border-b border-[#444] pr-[8px] pl-[5px]">
        <button className="h-[17px] rounded-[3px] bg-[#383838] px-[6px] font-semibold text-white">File</button>
        <button className="px-2 text-[#b3b3b3]">Assets</button>
        <button aria-label="Search" className="ml-auto">
          <Search size={11} />
        </button>
      </div>
      <section className="shrink-0 border-b-2 border-[#383838] pb-2">
        <div className="flex h-[26px] items-center justify-between pr-[8px] pl-[11px]">
          <h2 className="font-medium text-white">Pages</h2>
          <button aria-label="Add page">
            <Plus size={11} />
          </button>
        </div>
        <div className="flex flex-col gap-[5px] px-[6px] pt-[3px]">
          {["Laptop View - Frontend", "Mobile View"].map((name) => (
            <button
              key={name}
              onClick={() => setPage(name)}
              className={clsx("h-[17px] rounded-[3px] px-[5px] text-left", page === name && "bg-[#383838] font-medium text-white")}
            >
              {name}
            </button>
          ))}
        </div>
      </section>
      <section className="min-h-0 flex-1 overflow-hidden">
        <div className="flex h-[27px] items-center justify-between pr-[9px] pl-[11px]">
          <h2 className="font-medium text-white">Layers</h2>
          <button aria-label="Collapse layers">
            <Icon size={9}>
              <path d="M1 3h12M1 9h12M1 15h12M1 21h12M16 2h7l-3 5zM16 22h7l-3-5z" />
            </Icon>
          </button>
        </div>
        <button className="flex h-[22px] w-full items-center gap-[6px] pl-[13px] font-semibold text-white">
          <FrameIcon />
          Frame 10
        </button>
        <ul>
          {layers.map(({ type, name, pad }) => (
            <li key={name}>
              <button className={clsx("flex h-[22px] w-full items-center gap-[7px] whitespace-pre", pad)}>
                <span className="text-[#8c8c8c]">{layerIcons[type]}</span>
                {name}
              </button>
            </li>
          ))}
        </ul>
      </section>
    </aside>
  );
};

/* ---------- Right panel ---------- */

const RightPanel = () => {
  const [color, setColor] = useState("1E1E1E");
  const [opacity, setOpacity] = useState("100");

  return (
    <aside className="flex w-[164px] shrink-0 flex-col border-l border-[#444] bg-[#2c2c2c]">
      <header className="flex h-[55px] shrink-0 flex-col gap-[6px] border-b-2 border-[#383838] pt-1">
        <div className="flex h-[22px] items-center pr-1 pl-2">
          <button aria-label="Account" className="flex items-center gap-[2px]">
            <svg width="17" height="17" viewBox="0 0 34 34">
              <circle cx="17" cy="17" r="17" fill="#fff" />
              <circle cx="17" cy="17" r="12" fill="#efe6cf" />
              <path d="M9 26c0-7 4-8 8-8s8 1 8 8q-8 6-16 0z" fill="#2b4a80" />
              <ellipse cx="17" cy="15" rx="5" ry="6" fill="#b9764a" />
              <path d="M11 15c-1-11 13-11 12 0-2-5-10-5-12 0z" fill="#2b1a14" />
            </svg>
            <Caret />
          </button>
          <button aria-label="Present" className="ml-auto">
            <Icon size={12}>
              <path d="M3 2v20l18-10z" />
            </Icon>
          </button>
          <button aria-label="Present options" className="mr-[6px] ml-[6px]">
            <Caret />
          </button>
          <button className="h-[22px] w-[37px] rounded-[3px] bg-[#0c8ce9] font-medium text-white">Share</button>
        </div>
        <div className="flex h-4 items-center pr-[9px] pl-[5px]">
          <button className="h-4 rounded-[3px] bg-[#383838] px-[6px] font-medium text-white">Design</button>
          <button className="px-2 text-[#b3b3b3]">Prototype</button>
          <button className="ml-auto flex items-center gap-px">
            4%
            <Caret />
          </button>
        </div>
      </header>
      <section className="shrink-0 border-b border-[#444] pr-[7px] pb-[10px] pl-[11px]">
        <h2 className="flex h-[26px] items-center font-medium text-white">Page</h2>
        <div className="mt-1 flex h-4 items-center justify-between">
          <div className="flex h-4 w-[126px] items-center rounded-[3px] bg-[#383838]">
            <span className="ml-[3px] size-[10px] rounded-[1px] border border-[#2c2c2c] bg-[#1e1e1e]" />
            <input
              aria-label="Page colour"
              value={color}
              onChange={(e) => setColor(e.target.value)}
              className="ml-1 h-4 w-0 flex-1 border-r border-[#2c2c2c] bg-transparent outline-none"
            />
            <input
              aria-label="Opacity"
              value={opacity}
              onChange={(e) => setOpacity(e.target.value)}
              className="ml-[6px] w-5 bg-transparent outline-none"
            />
            <span className="w-3 text-[#b3b3b3]">%</span>
          </div>
          <button aria-label="Toggle visibility">
            <Eye size={11} />
          </button>
        </div>
      </section>
      {["Variables", "Styles", "Export"].map((name) => (
        <section key={name} className="flex h-7 shrink-0 items-center justify-between border-b border-[#444] pr-[7px] pl-[11px] text-[#b3b3b3]">
          <h2 className="font-medium">{name}</h2>
          <button aria-label={`${name} settings`}>
            {name === "Variables" ? (
              <Icon size={10}>
                <path d="M6 2v10M6 18v5M3 15l3-3 3 3-3 3zM18 22V9" />
                <circle cx="18" cy="5" r="3" />
              </Icon>
            ) : (
              <Plus size={11} />
            )}
          </button>
        </section>
      ))}
      <section className="pr-[7px] pl-[10px]">
        <h2 className="flex h-[22px] items-center pl-px font-medium text-white">Plugin</h2>
        <div className="mt-1 flex h-6 items-center">
          <svg width="14" height="14" viewBox="0 0 42 42" className="shrink-0">
            <rect width="42" height="42" rx="6" fill="#fff" />
            <path d="M12 0h24a6 6 0 0 1 6 6v24H12z" fill="#111" />
            <path d="M6 0h3v20H0V6a6 6 0 0 1 6-6z" fill="#f0522a" />
            <path d="M0 24h9v18H6a6 6 0 0 1-6-6z" fill="#26b7e8" />
            <path d="M30 33h12v3a6 6 0 0 1-6 6h-6z" fill="#1abc6b" />
            <g fill="#fff" fontSize="9" fontWeight="700">
              <text x="13" y="10">html</text>
              <text x="13" y="18">to</text>
              <text x="13" y="27">design</text>
            </g>
          </svg>
          <a href="#plugin" className="ml-[4px] text-white">Open html.to.design</a>
          <button aria-label="Remove plugin" className="ml-auto">
            <Minus size={11} />
          </button>
        </div>
      </section>
    </aside>
  );
};

/* ---------- Toolbar ---------- */

const ToolCaret: React.FC<{ label: string }> = ({ label }) => (
  <button aria-label={label} className="mr-[5px] flex w-3 justify-center">
    <Caret />
  </button>
);

const Toolbar = () => (
  <div
    role="toolbar"
    className="absolute bottom-[7px] left-1/2 flex h-[34px] -translate-x-1/2 items-center rounded-[10px] bg-[#2c2c2c] px-[6px] shadow-[0_1px_4px_rgba(0,0,0,0.6)]"
  >
    <button aria-label="Move" className="flex size-[22px] items-center justify-center rounded-[3px] bg-[#0c8ce9] text-white">
      <Icon size={14}>
        <path d="M3 3l6 18 4-8 8-4z" />
      </Icon>
    </button>
    <ToolCaret label="Move tools" />
    <button aria-label="Frame" className="flex w-[22px] justify-center"><FrameIcon size={12} /></button>
    <ToolCaret label="Region tools" />
    <button aria-label="Rectangle" className="flex w-[22px] justify-center">
      <Icon size={14}><rect x="3" y="3" width="18" height="18" rx="1" /></Icon>
    </button>
    <ToolCaret label="Shape tools" />
    <button aria-label="Pen" className="flex w-[22px] justify-center">
      <Icon size={14}>
        <path d="M2 3l3 13c1 4 7 6 11 6l6-5c1-5-1-10-5-12zM2 3l9 8" />
        <circle cx="13" cy="13" r="3" />
      </Icon>
    </button>
    <ToolCaret label="Drawing tools" />
    <button aria-label="Text" className="flex w-[22px] justify-center">
      <Icon size={12}><path d="M2 6V2h20v4M12 2v20M8 22h8" /></Icon>
    </button>
    <button aria-label="Comment" className="ml-[6px] flex w-[22px] justify-center">
      <Icon size={14}><path d="M2 21V12a10 10 0 1 1 10 9z" /></Icon>
    </button>
    <ToolCaret label="Comment tools" />
    <button aria-label="Actions" className="flex w-[22px] justify-center">
      <Icon size={13}>
        <path d="M6 1l5 5-5 5-5-5zM18 14v9M13 18h10" />
        <circle cx="18" cy="6" r="4" />
        <rect x="2" y="14" width="8" height="8" rx="2" />
      </Icon>
    </button>
    <div className="mx-[5px] h-[34px] w-px bg-[#383838]" />
    <div className="flex h-[22px] w-[63px] items-center justify-between rounded-[3px] bg-[#444] px-px text-[#b3b3b3]">
      <button aria-label="Draw" className="flex w-5 justify-center">
        <Icon size={11}><path d="M2 12C9 9 12 1 15 3S4 14 6 16 17 5 19 8 9 18 11 20s8-8 10-6-4 4-3 7" /></Icon>
      </button>
      <button aria-label="Design" className="flex h-5 w-[19px] items-center justify-center rounded-[3px] bg-[#2c2c2c] text-[#5fa8dd]">
        <Icon size={12}>
          <path d="M2 2h20v7H2zM2 9v13h6V2M14 2v3M18 2v3M12 15a2 2 0 0 1 2-2h6a2 2 0 0 1 2 2c0 3-2 5-5 7-3-2-5-4-5-7z" />
        </Icon>
      </button>
      <button aria-label="Dev mode" className="flex w-5 justify-center">
        <CodeXml size={11} />
      </button>
    </div>
  </div>
);

export default function App() {
  return (
    <div className="flex h-screen overflow-hidden border-t-2 border-[#3b3b3b] bg-[#1e1e1e] font-[Inter,sans-serif] text-[8px] leading-3 text-[#e6e6e6]">
      <LeftPanel />
      <main className="relative min-w-0 flex-1 overflow-hidden">
        <Canvas />
        <div className="absolute top-[105px] right-[2px] h-[323px] w-[5px] rounded-full border border-[#666]" />
        <Toolbar />
      </main>
      <RightPanel />
      <button
        aria-label="Help"
        className="absolute right-[15px] bottom-[14px] size-[22px] rounded-full border border-[#444] bg-[#2c2c2c] text-[12px] font-medium text-white shadow-md"
      >
        ?
      </button>
    </div>
  );
}
